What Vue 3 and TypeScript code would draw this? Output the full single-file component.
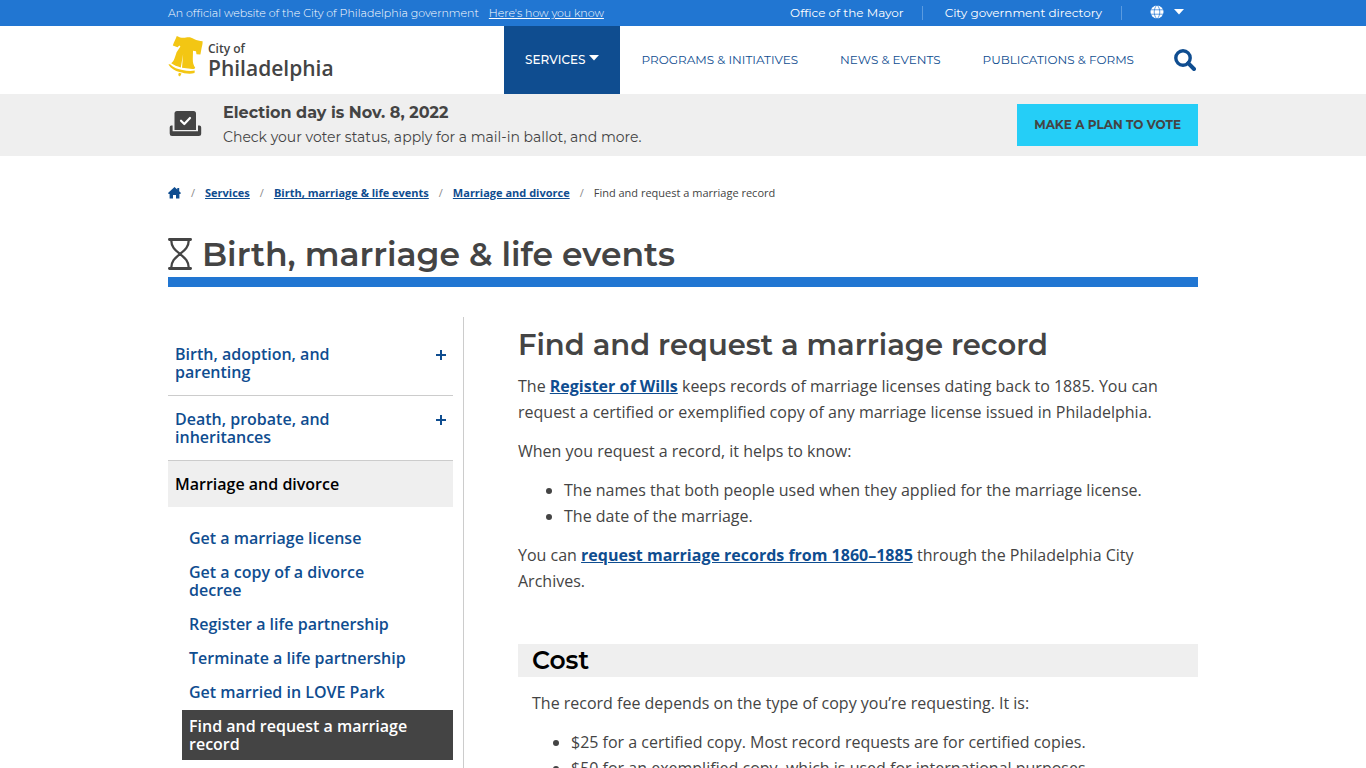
<script setup lang="ts">
interface Crumb {
  label: string
  href: string
}

interface Topic {
  label: string
  href: string
}

const crumbs: Crumb[] = [
  { label: 'Services', href: '#services' },
  { label: 'Birth, marriage & life events', href: '#life-events' },
  { label: 'Marriage and divorce', href: '#marriage' },
]

const menu: string[] = ['Programs & initiatives', 'News & events', 'Publications & forms']

const topics: Topic[] = [
  { label: 'Birth, adoption, and parenting', href: '#birth' },
  { label: 'Death, probate, and inheritances', href: '#death' },
]

const pages: string[] = [
  'Get a marriage license',
  'Get a copy of a divorce decree',
  'Register a life partnership',
  'Terminate a life partnership',
  'Get married in LOVE Park',
  'Find and request a marriage record',
]
const currentPage = 'Find and request a marriage record'
</script>

<template>
  <div class="page">
    <div class="topbar">
      <div class="wrap topbar-row">
        <p class="official">
          <span>An official website of the City of Philadelphia government</span>
          <a href="#trust">Here's how you know</a>
        </p>
        <nav class="utility" aria-label="Utility">
          <a class="utility-link" href="#mayor">Office of the Mayor</a>
          <a class="utility-link" href="#directory">City government directory</a>
          <button class="language" type="button" aria-label="Choose language">
            <svg width="14" height="14" viewBox="0 0 14 14" aria-hidden="true">
              <circle cx="7" cy="7" r="6.5" fill="#fff" />
              <path d="M0 4.8H14M0 9.2H14M7 0C3.3 3.4 3.3 10.6 7 14M7 0C10.7 3.4 10.7 10.6 7 14" fill="none" stroke="#2176d2" stroke-width=".7" />
            </svg>
            <svg width="10" height="6" viewBox="0 0 10 6" aria-hidden="true"><path d="M0 0H10L5 5.5Z" fill="#fff" /></svg>
          </button>
        </nav>
      </div>
    </div>

    <header class="wrap header">
      <a class="logo" href="#home">
        <svg width="35" height="41" viewBox="0 0 35 41" aria-hidden="true">
          <g fill="#f3c613">
            <path d="M8.8 0 C12 1.8 15 2.2 18 1.6 C21 .8 23 1.2 26 3 C29 4.6 31.5 4.8 34.6 5.2 C34.8 8 34 10 33.5 12.5 L32.4 18.4 L28.5 18.2 L28 15.2 L25 14.8 L24.8 23 C24.8 27 25.4 29 27.2 31.7 C26.6 32.8 25.8 33.2 24.4 33.1 L14 31.8 L15.1 18.2 L12.8 31.4 C9 30.4 6 29 3.2 27.2 C6.4 25 7 20.6 8.6 16.2 L12.4 10.5 L11.4 9.4 L9.5 11.2 L4.8 9.4 C6 6.2 7.5 3.4 8.8 0Z" />
            <path d="M.4 28.4 L2 28.2 C5.5 31.8 10 33.3 14.5 34 C18.5 34.8 22.4 35.4 26.8 34.6 L26.5 37 C21.6 38.4 16 37.3 11.5 36 C7 34.6 2.8 32.4 .4 28.4Z" />
            <path d="M10.8 36.8 L13.5 37.6 L12 40.6 L10.2 39.2Z" />
          </g>
        </svg>
        <span class="logo-text"><span class="logo-small">City of</span><span class="logo-large">Philadelphia</span></span>
      </a>
      <nav class="menu" aria-label="Main">
        <a class="menu-link menu-active" href="#services">
          Services
          <svg width="10" height="6" viewBox="0 0 10 6" aria-hidden="true"><path d="M0 0H10L5 5.5Z" fill="#fff" /></svg>
        </a>
        <a v-for="item in menu" :key="item" class="menu-link" href="#menu">{{ item }}</a>
        <button class="search" type="button" aria-label="Search">
          <svg width="22" height="22" viewBox="0 0 22 22" fill="none" stroke="#0f4d90" aria-hidden="true">
            <circle cx="9" cy="9" r="7.2" stroke-width="3.4" />
            <path d="M14.2 14.2L20 20" stroke-width="4" stroke-linecap="round" />
          </svg>
        </button>
      </nav>
    </header>

    <section class="alert" aria-label="Announcement">
      <div class="wrap alert-row">
        <svg class="ballot" width="33" height="26" viewBox="0 0 33 26" aria-hidden="true">
          <path d="M8 0H24.5Q27 0 27 2.5V19H5.5V2.5Q5.5 0 8 0Z" fill="#444" />
          <path d="M12 9.7L15.3 13L21 7" fill="none" stroke="#fff" stroke-width="2.2" stroke-linecap="round" stroke-linejoin="round" />
          <path d="M2.2 14.5H3.6V20.2H29V14.5H30.4Q32.2 14.5 32.2 16.5V22.5Q32.2 25 29.7 25H3Q.7 25 .7 22.5V16.5Q.7 14.5 2.2 14.5Z" fill="#444" />
        </svg>
        <div class="alert-copy">
          <strong>Election day is Nov. 8, 2022</strong>
          <span>Check your voter status, apply for a mail-in ballot, and more.</span>
        </div>
        <a class="vote" href="#vote">Make a plan to vote</a>
      </div>
    </section>

    <div class="wrap">
      <nav class="crumbs" aria-label="Breadcrumbs">
        <a class="home" href="#home" aria-label="Home">
          <svg width="13" height="12" viewBox="0 0 13 12" aria-hidden="true"><path d="M6.5 0L9.3 2.5V1H11.2V4.2L13 6L12.2 6.9H11.4V11.4H8V8H5V11.4H1.6V6.9H.7L0 6Z" fill="#0f4d90" /></svg>
        </a>
        <template v-for="crumb in crumbs" :key="crumb.label">
          <span class="slash" aria-hidden="true">/</span>
          <a :href="crumb.href">{{ crumb.label }}</a>
        </template>
        <span class="slash" aria-hidden="true">/</span>
        <span aria-current="page">Find and request a marriage record</span>
      </nav>

      <h1 class="section-title">
        <svg width="24" height="32" viewBox="0 0 24 32" fill="none" stroke="#444" aria-hidden="true">
          <path d="M1.4 1.5H22.6M1.4 30.5H22.6" stroke-width="2.8" stroke-linecap="round" />
          <path d="M3.2 2C3.4 9 6.5 11.5 12 16C17.5 20.5 20.6 23 20.8 30M20.8 2C20.6 9 17.5 11.5 12 16C6.5 20.5 3.4 23 3.2 30" stroke-width="2.3" />
        </svg>
        Birth, marriage &amp; life events
      </h1>

      <div class="columns">
        <aside class="sidebar">
          <nav aria-label="Topics">
            <a v-for="topic in topics" :key="topic.label" class="topic" :href="topic.href">
              <span class="topic-label">{{ topic.label }}</span>
              <svg width="12" height="12" viewBox="0 0 12 12" aria-hidden="true"><path d="M6 1V11M1 6H11" stroke="#0f4d90" stroke-width="2" /></svg>
            </a>
            <a class="topic topic-open" href="#marriage">Marriage and divorce</a>
            <ul class="pages">
              <li v-for="page in pages" :key="page">
                <a href="#page" :class="{ current: page === currentPage }">{{ page }}</a>
              </li>
            </ul>
          </nav>
        </aside>

        <main class="content">
          <h2>Find and request a marriage record</h2>
          <p>The <a href="#wills">Register of Wills</a> keeps records of marriage licenses dating back to 1885. You can request a certified or exemplified copy of any marriage license issued in Philadelphia.</p>
          <p>When you request a record, it helps to know:</p>
          <ul>
            <li>The names that both people used when they applied for the marriage license.</li>
            <li>The date of the marriage.</li>
          </ul>
          <p>You can <a href="#archives">request marriage records from 1860–1885</a> through the Philadelphia City Archives.</p>
          <section class="cost">
            <h3>Cost</h3>
            <div class="cost-body">
              <p>The record fee depends on the type of copy you’re requesting. It is:</p>
              <ul>
                <li>$25 for a certified copy. Most record requests are for certified copies.</li>
                <li>$50 for an exemplified copy, which is used for international purposes.</li>
              </ul>
            </div>
          </section>
        </main>
      </div>
    </div>
  </div>
</template>

<style>
body {
  margin: 0;
  background: #fff;
}
</style>

<style scoped>
.page {
  --display: Montserrat, Inter, sans-serif;
  color: #444;
  font-family: 'Open Sans', sans-serif;
  font-size: 16px;
  line-height: 26px;
}
.wrap {
  max-width: 1030px;
  margin: 0 auto;
}
a {
  color: #0f4d90;
}
button {
  border: 0;
  padding: 0;
  background: none;
  cursor: pointer;
}
svg {
  flex: none;
}
.topbar {
  background: #2176d2;
  font-family: var(--display);
}
.topbar a,
.topbar {
  color: #fff;
}
.topbar-row,
.official,
.utility {
  display: flex;
  align-items: center;
}
.topbar-row {
  justify-content: space-between;
}
.official {
  gap: 10px;
  margin: 0;
  font-size: 11px;
  font-weight: 300;
}
.utility {
  padding-right: 14px;
  font-size: 12px;
}
.utility-link {
  padding-right: 19px;
  margin-right: 23px;
  text-decoration: none;
  line-height: 14px;
  border-right: 1px solid #5a9be0;
}
.utility-link:first-child {
  padding-right: 18px;
  margin-right: 22px;
}
.language {
  display: flex;
  align-items: center;
  gap: 10px;
  margin-left: 5px;
  padding-bottom: 2px;
}
.header {
  display: flex;
  justify-content: space-between;
  min-height: 68px;
}
.logo {
  display: flex;
  align-items: center;
  gap: 5px;
  padding-bottom: 7px;
  color: #444;
  text-decoration: none;
}
.logo-text {
  display: flex;
  flex-direction: column;
  padding-top: 9px;
  font-family: 'Open Sans', sans-serif;
  font-weight: 600;
}
.logo-small {
  font-size: 12px;
  line-height: 14px;
}
.logo-large {
  font-size: 21px;
  line-height: 25px;
}
.menu {
  display: flex;
  font-family: var(--display);
  font-size: 12px;
}
.menu-link {
  display: flex;
  align-items: center;
  gap: 4px;
  padding: 0 21px;
  text-decoration: none;
  text-transform: uppercase;
}
.menu-link svg {
  margin-bottom: 4px;
}
.menu-active {
  background: #0f4d90;
  color: #fff;
  font-weight: 500;
}
.search {
  display: flex;
  align-items: center;
  padding: 0 2px 0 19px;
}
.alert {
  background: #efefef;
}
.alert-row {
  display: flex;
  align-items: center;
  min-height: 62px;
  font-family: var(--display);
}
.ballot {
  margin: 0 21px 2px 1px;
}
.alert-copy {
  display: flex;
  flex-direction: column;
  flex: 1;
  font-size: 14px;
  line-height: 24px;
}
.alert-copy strong {
  font-size: 16px;
}
.vote {
  padding: 0 17px;
  background: #25cef7;
  color: #444;
  font-size: 12px;
  font-weight: 700;
  line-height: 42px;
  text-decoration: none;
  text-transform: uppercase;
}
.crumbs {
  display: flex;
  align-items: center;
  gap: 10px;
  padding-top: 24px;
  font-size: 11px;
}
.crumbs a {
  font-weight: 700;
}
.home {
  display: flex;
}
.slash {
  color: #8a8a8a;
}
.section-title {
  display: flex;
  align-items: center;
  gap: 10px;
  margin: 25px 0 30px;
  border-bottom: 10px solid #2176d2;
  font-family: var(--display);
  font-size: 33px;
  font-weight: 600;
  line-height: 46px;
}
.columns {
  display: flex;
}
.sidebar {
  box-sizing: border-box;
  flex: 0 0 296px;
  padding: 14px 10px 40px 0;
  border-right: 1px solid #ccc;
  font-weight: 600;
  line-height: 18px;
}
.topic {
  display: flex;
  justify-content: space-between;
  padding: 14px 6px 14px 7px;
  border-bottom: 1px solid #ccc;
  text-decoration: none;
}
.topic svg {
  margin-top: 4px;
}
.topic-label {
  max-width: 180px;
}
.topic-open {
  border: 0;
  background: #efefef;
  color: #000;
}
.pages {
  display: flex;
  flex-direction: column;
  gap: 2px;
  margin: 0;
  padding: 15px 0 0 14px;
  list-style: none;
}
.pages a {
  display: block;
  padding: 7px 40px 7px 7px;
  text-decoration: none;
}
.pages .current {
  background: #444;
  color: #fff;
}
.content {
  flex: 1;
  padding: 11px 0 40px 54px;
}
.content p,
.content ul {
  margin: 0 0 13px;
}
.content ul {
  padding-left: 46px;
}
.content p a {
  font-weight: 700;
}
h2 {
  margin: 0 0 11px;
  font-family: var(--display);
  font-size: 29px;
  font-weight: 600;
  line-height: 34px;
}
.cost {
  margin-top: 50px;
}
h3 {
  margin: 0 0 13px;
  padding: 0 14px;
  background: #efefef;
  color: #000;
  font-family: var(--display);
  font-size: 25px;
  font-weight: 600;
  line-height: 33px;
}
.cost-body {
  padding: 0 14px;
}
.cost-body ul {
  padding-left: 39px;
}
</style>
